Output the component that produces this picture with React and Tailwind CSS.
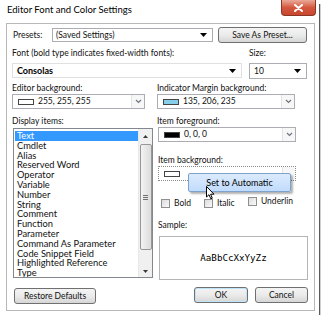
import React from "react";

const items = [
  "Text",
  "Cmdlet",
  "Alias",
  "Reserved Word",
  "Operator",
  "Variable",
  "Number",
  "String",
  "Comment",
  "Function",
  "Parameter",
  "Command As Parameter",
  "Code Snippet Field",
  "Highlighted Reference",
  "Type",
];

function Tri() {
  return (
    <svg width="7" height="4" viewBox="0 0 7 4" className="shrink-0">
      <path d="M0 0 H7 L3.5 4 Z" fill="#000" />
    </svg>
  );
}

function Chevron() {
  return (
    <svg width="7" height="5" viewBox="0 0 7 5">
      <path d="M1 1 L3.5 3.5 L6 1" stroke="#6d7480" strokeWidth="1.2" fill="none" />
    </svg>
  );
}

function Btn({ children, className = "" }) {
  return (
    <div
      className={
        "flex items-center justify-center rounded-[3px] border border-[#707070] bg-gradient-to-b from-[#f4f4f4] via-[#ebebeb] to-[#d6d6d6] text-[8.5px] text-[#111] " +
        className
      }
    >
      {children}
    </div>
  );
}

function ColorCombo({ swatch, value, className = "", dotted = false }) {
  return (
    <div
      className={
        "flex items-center h-[15px] bg-white " +
        (dotted ? "border border-dotted border-[#8a8a8a] " : "border border-[#abadb3] ") +
        className
      }
    >
      <div className={"ml-[5px] w-[16px] h-[6px] border border-[#444] " + swatch} />
      <div className="ml-[4px] flex-1 text-[8.5px] text-[#111] leading-none">{value}</div>
      <div className="w-[13px] h-full border-l border-[#e3e3e3] bg-[#f7f7f7] flex items-center justify-center">
        {dotted ? <span className="text-[7px] text-[#555] leading-none -mt-[3px]">..</span> : <Chevron />}
      </div>
    </div>
  );
}

function Check({ label, className = "" }) {
  return (
    <div className={"flex items-center " + className}>
      <div className="w-[9px] h-[9px] border border-[#8f8f8f] bg-gradient-to-br from-[#dcdcdc] to-[#fafafa]" />
      <span className="ml-[4px] text-[8.5px] text-[#111] leading-none">{label}</span>
    </div>
  );
}

export default function App() {
  return (
    <div className="relative w-[321px] h-[315px] overflow-hidden bg-white font-[Lato] text-[8.5px] text-[#111] leading-[12px]">
      {/* right frame line */}
      <div className="absolute right-0 top-[4px] bottom-0 w-[2px] border-l border-[#5a5a5a] bg-[#cfcfcf]" />

      {/* Title bar */}
      <div className="h-[23px] flex items-start justify-between">
        <div className="pl-[7px] pt-[4px] text-[9.5px] text-black leading-[12px]">
          Editor Font and Color Settings
        </div>
        <div className="mr-[5px] w-[35px] h-[16px] rounded-b-[4px] border border-t-0 border-[#8c3526] bg-gradient-to-b from-[#e9a998] via-[#d4573f] to-[#c8472f] flex items-center justify-center">
          <svg width="9" height="8" viewBox="0 0 9 8">
            <path d="M1 1 L8 7 M8 1 L1 7" stroke="#fff" strokeWidth="2" strokeLinecap="round" />
          </svg>
        </div>
      </div>

      {/* Panel */}
      <div className="mx-[6px] h-[288px] border border-[#b8b8b8] flex flex-col">
        {/* Row 1 */}
        <div className="mt-[3px] h-[16px] flex items-center">
          <span className="ml-[6px] w-[39px]">Presets:</span>
          <div className="w-[161px] h-[14px] border border-[#abadb3] bg-white flex items-center pl-[3px] pr-[5px]">
            <span className="flex-1 leading-none">(Saved Settings)</span>
            <Tri />
          </div>
          <Btn className="ml-[5px] w-[89px] h-[16px]">Save As Preset...</Btn>
        </div>

        {/* Row 2 */}
        <div className="mt-[4px] h-[12px] flex">
          <span className="ml-[5px] w-[237px]">Font (bold type indicates fixed-width fonts):</span>
          <span>Size:</span>
        </div>

        {/* Row 3 */}
        <div className="mt-[4px] h-[15px] flex">
          <div className="ml-[5px] w-[230px] h-[15px] border border-[#e0e0e0] bg-white flex items-center pl-[4px] pr-[5px]">
            <span className="flex-1 font-bold text-[9px] leading-none text-black">Consolas</span>
            <Tri />
          </div>
          <div className="ml-[7px] w-[58px] h-[16px] border border-[#abadb3] bg-white flex items-center pl-[4px] pr-[5px]">
            <span className="flex-1 leading-none">10</span>
            <Tri />
          </div>
        </div>

        {/* Row 4 */}
        <div className="mt-[4px] h-[12px] flex">
          <span className="ml-[5px] w-[145px]">Editor background:</span>
          <span>Indicator Margin background:</span>
        </div>

        {/* Row 5 */}
        <div className="h-[15px] flex">
          <ColorCombo swatch="bg-white" value="255, 255, 255" className="ml-[5px] w-[133px]" />
          <ColorCombo swatch="bg-[#87ceeb]" value="135, 206, 235" className="ml-[12px] w-[138px]" />
        </div>

        {/* Row 6 */}
        <div className="mt-[6px] h-[12px] flex">
          <span className="ml-[5px] w-[145px]">Display items:</span>
          <span>Item foreground:</span>
        </div>

        {/* Two columns */}
        <div className="flex">
          {/* list box */}
          <div className="ml-[6px] mt-[1px] w-[140px] h-[150px] border border-[#828790] bg-white flex">
            <div className="flex-1 pt-[2px] pl-[1px] overflow-hidden">
              {items.map((t, i) => (
                <div
                  key={t}
                  className={
                    "h-[9.8px] leading-[9.8px] pl-[2px] text-[9.3px] whitespace-nowrap " +
                    (i === 0 ? "bg-[#3399ff] text-white" : "text-[#111]")
                  }
                >
                  {t}
                </div>
              ))}
            </div>
            <div className="w-[14px] h-full bg-[#f0f0f0] border-l border-[#e8e8e8] flex flex-col items-center">
              <div className="h-[14px] flex items-center justify-center">
                <svg width="5" height="3" viewBox="0 0 5 3">
                  <path d="M0 3 L2.5 0 L5 3 Z" fill="#3a3a3a" />
                </svg>
              </div>
              <div className="mt-[1px] w-[12px] h-[106px] rounded-[2px] border border-[#979797] bg-gradient-to-r from-[#f3f3f3] to-[#dcdcdc] flex flex-col items-center justify-center gap-[1px]">
                <div className="w-[5px] h-px bg-[#707070]" />
                <div className="w-[5px] h-px bg-[#707070]" />
                <div className="w-[5px] h-px bg-[#707070]" />
              </div>
              <div className="flex-1" />
              <div className="h-[12px] flex items-center justify-center">
                <svg width="5" height="3" viewBox="0 0 5 3">
                  <path d="M0 0 L2.5 3 L5 0 Z" fill="#3a3a3a" />
                </svg>
              </div>
            </div>
          </div>

          {/* right column */}
          <div className="ml-[5px] flex flex-col">
            <ColorCombo swatch="bg-black" value="0, 0, 0" className="w-[138px]" />
            <div className="mt-[12px] h-[12px]">Item background:</div>
            <ColorCombo swatch="bg-white" value="" className="w-[138px] h-[14px]" dotted />
            <div className="mt-[16px] h-[12px] flex items-center">
              <Check label="Bold" className="ml-[3px] w-[43px]" />
              <Check label="Italic" className="w-[44px]" />
              <Check label="Underlin" className="-mt-[3px]" />
            </div>
            <div className="mt-[10px] h-[12px]">Sample:</div>
            <div className="mt-[5px] ml-[1px] w-[149px] h-[44px] border border-[#b5b5b5] bg-white flex items-center justify-center">
              <span className="font-['DejaVu_Sans_Mono',monospace] text-[9.2px] text-black">AaBbCcXxYyZz</span>
            </div>
          </div>
        </div>

        {/* Bottom buttons */}
        <div className="mt-[7px] flex items-start">
          <Btn className="ml-[7px] mt-px w-[82px] h-[16px]">Restore Defaults</Btn>
          <div className="flex-1" />
          <Btn className="w-[54px] h-[16px] border-[#3c7fb1] shadow-[inset_0_0_0_1px_#bfe3f8]">OK</Btn>
          <Btn className="ml-[7px] mr-[6px] w-[53px] h-[16px]">Cancel</Btn>
        </div>
      </div>

      {/* Popup menu */}
      <div className="absolute left-[188px] top-[173px] w-[103px] h-[19px] border border-[#7da2ce] rounded-[2px] bg-gradient-to-b from-[#dcebfc] to-[#c1dbfc] shadow-[2px_2px_2px_rgba(0,0,0,0.3)] flex items-center justify-center">
        <span className="text-[9px] text-black leading-none">Set to Automatic</span>
      </div>

      {/* Cursor */}
      <svg className="absolute left-[206px] top-[186px]" width="9" height="14" viewBox="0 0 9 14">
        <path d="M0.5 0.5 L0.5 11 L3 8.7 L4.8 12.8 L6.3 12.2 L4.6 8.2 L8 8.2 Z" fill="#fff" stroke="#000" strokeWidth="1" strokeLinejoin="round" />
      </svg>
    </div>
  );
}
